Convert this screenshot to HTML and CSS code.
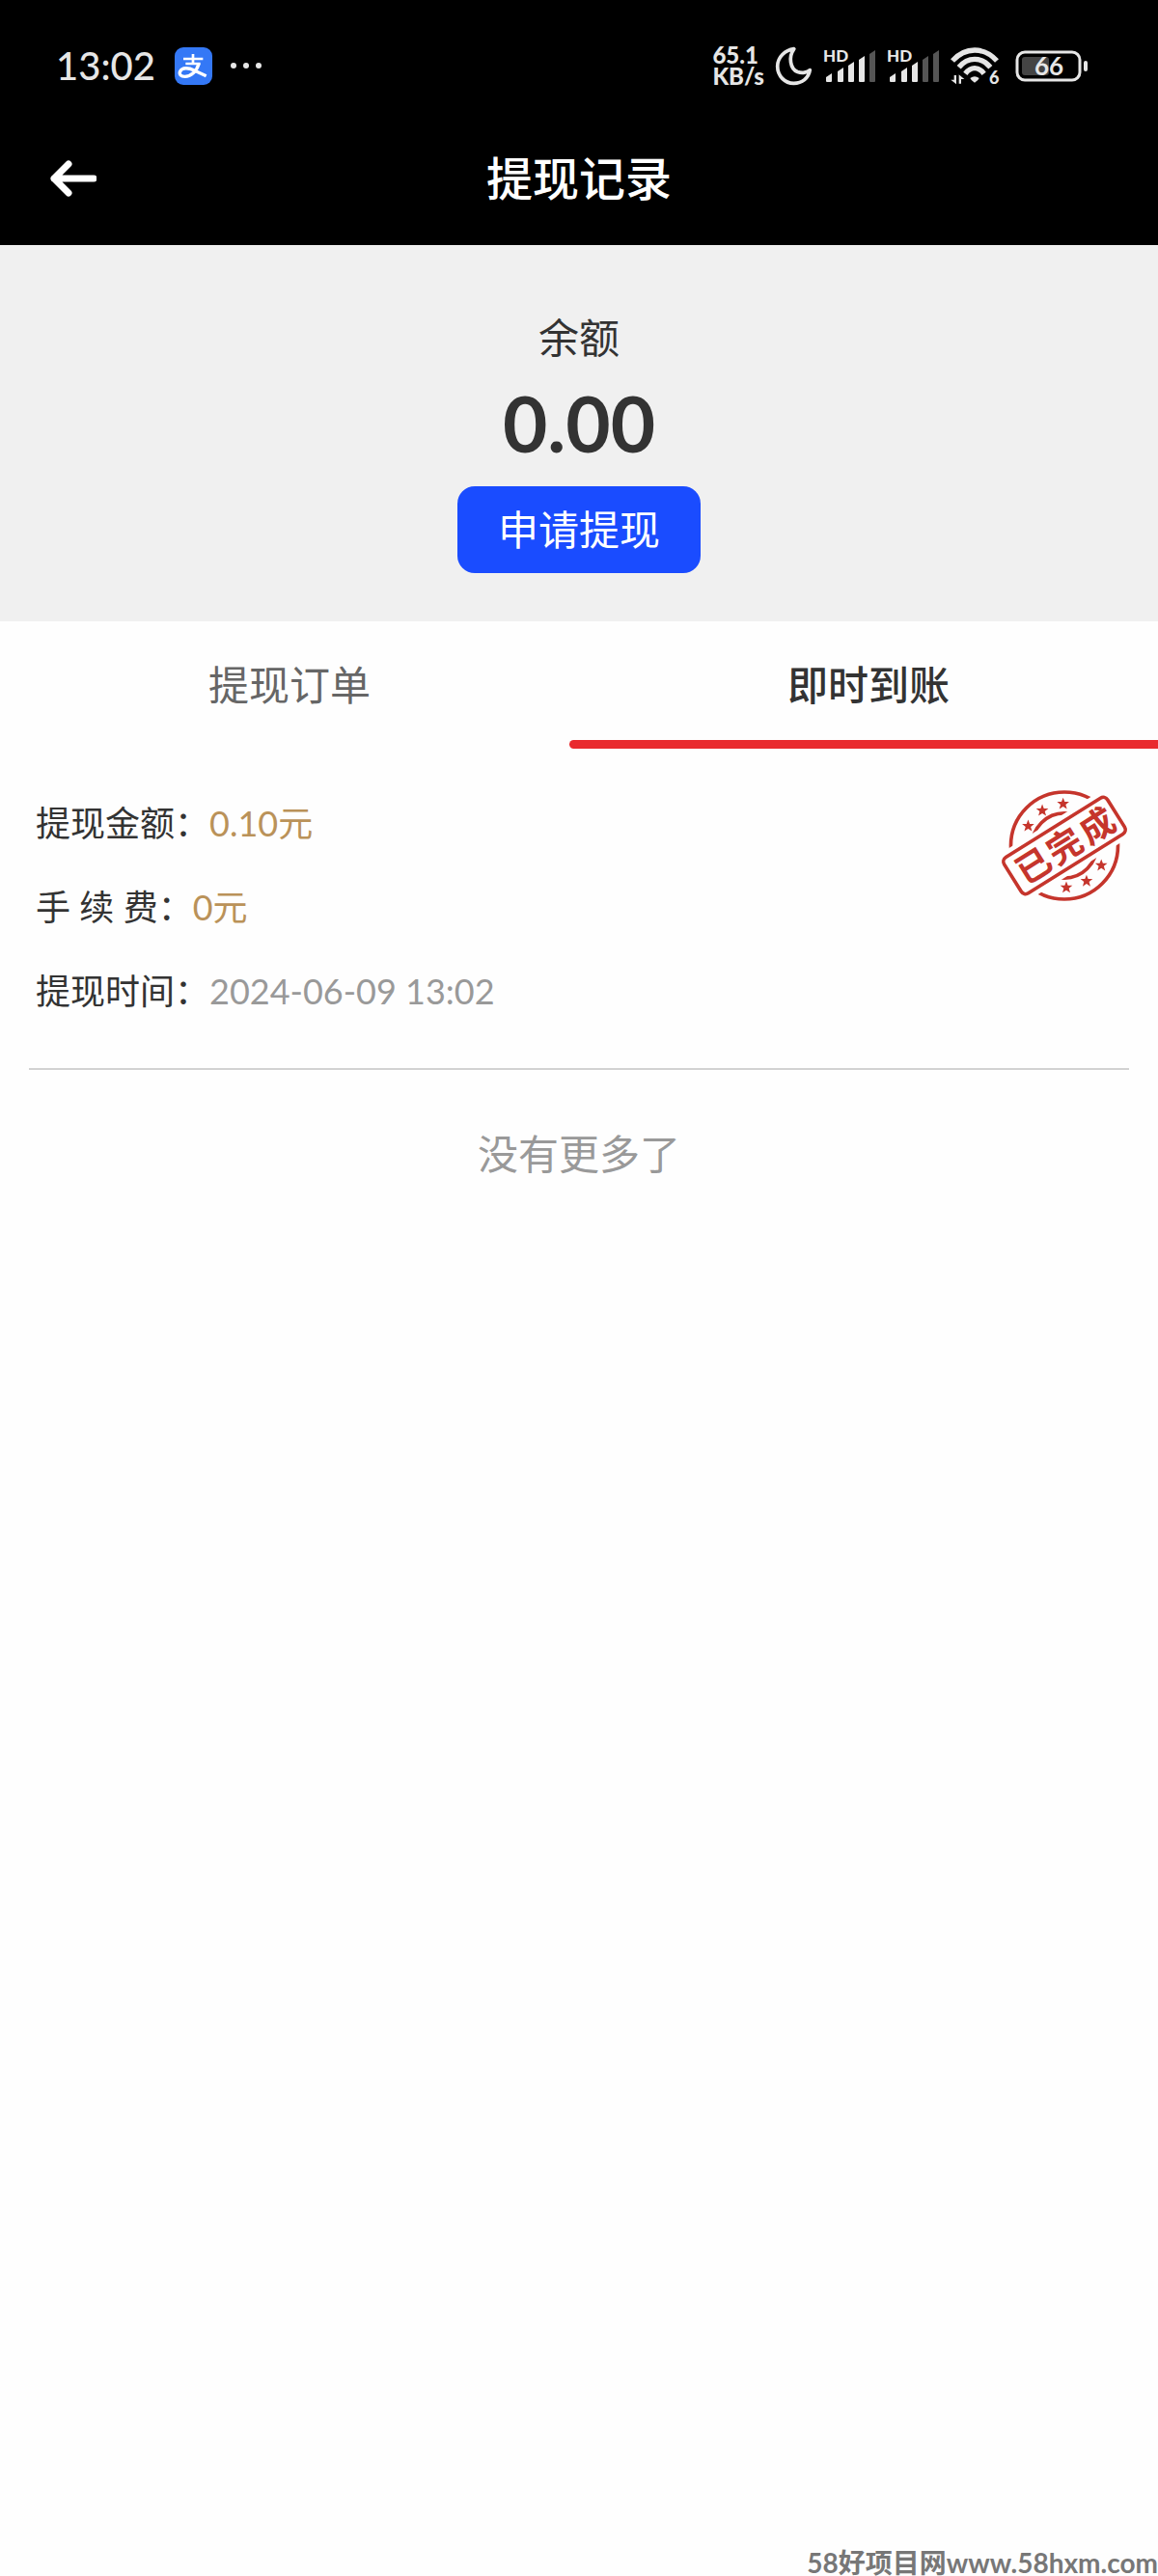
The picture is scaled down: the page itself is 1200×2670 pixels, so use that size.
FILE: index.html
```
<!DOCTYPE html>
<html lang="zh-CN">
<head>
    <meta charset="utf-8">
    <meta name="viewport" content="width=device-width, initial-scale=1">
    <title>提现记录</title>
    <link rel="stylesheet" href="styles.css">
</head>
<body>
    <header class="header">
        <div class="status-bar">
            <div class="status-left">
                <span class="clock">13:02</span>
                <svg class="app-icon" viewBox="0 0 117 117" aria-hidden="true">
                    <rect width="117" height="117" rx="27" fill="#3478f6"/>
                    <g fill="none" stroke="#fff">
                        <path d="M27 36H88M57 21V51M34 51H80" stroke-width="8"/>
                        <path d="M75 51C68 76 50 91 32 91C19 91 13 84 17 75C23 62 43 63 61 72L98 89" stroke-width="10"/>
                    </g>
                </svg>
                <svg class="dots" viewBox="0 0 34 8" aria-hidden="true">
                    <circle cx="4" cy="4" r="3"/>
                    <circle cx="17" cy="4" r="3"/>
                    <circle cx="30" cy="4" r="3"/>
                </svg>
            </div>
            <div class="status-right">
                <p class="speed">65.1<br>KB/s</p>
                <svg class="moon" viewBox="0 0 110 116" aria-hidden="true">
                    <path d="M56 5C29 9 5 29 5 59C5 89 28 111 55 111C81 111 101 95 105 70C97 78 81 81 67 76C44 67 38 30 56 5Z"/>
                </svg>
                <svg class="signal" viewBox="0 0 54 36" aria-hidden="true">
                    <text x="0" y="14">HD</text>
                    <path d="M3 30L9 26V34Q9 35 8 35H4Q3 35 3 34ZM15 24L21 20V34Q21 35 20 35H16Q15 35 15 34ZM26 18L32 14V34Q32 35 31 35H27Q26 35 26 34ZM37 12L43 8V34Q43 35 42 35H38Q37 35 37 34Z"/>
                    <path class="dim" d="M48 6L54 2V34Q54 35 53 35H49Q48 35 48 34Z"/>
                </svg>
                <svg class="signal" viewBox="0 0 54 36" aria-hidden="true">
                    <text x="0" y="14">HD</text>
                    <path d="M3 30L9 26V34Q9 35 8 35H4Q3 35 3 34ZM15 24L21 20V34Q21 35 20 35H16Q15 35 15 34ZM26 18L32 14V34Q32 35 31 35H27Q26 35 26 34Z"/>
                    <path class="dim" d="M37 12L43 8V34Q43 35 42 35H38Q37 35 37 34ZM48 6L54 2V34Q54 35 53 35H49Q48 35 48 34Z"/>
                </svg>
                <svg class="wifi" viewBox="0 0 153 117" aria-hidden="true">
                    <g fill="none" stroke="#e6e6e6" stroke-width="16">
                        <path d="M6 42Q36 9 75 9T144 42"/>
                        <path d="M26 62Q47 37 75 37T124 62"/>
                        <path d="M46 82Q59 65 75 65T104 82"/>
                    </g>
                    <path d="M61 96Q75 86 89 96Q86 104 75 110Q64 104 61 96Z"/>
                    <path d="M11 87H18V115L1 101H11ZM26 113V85L43 99H33V113Z"/>
                    <text x="120" y="114">6</text>
                </svg>
                <svg class="battery" viewBox="0 0 75 33" aria-hidden="true">
                    <rect x="7" y="7" width="28" height="19" rx="3" fill="#444"/>
                    <rect x="2" y="2" width="65" height="29" rx="8" fill="none" stroke="#e6e6e6" stroke-width="3"/>
                    <rect x="71" y="11" width="4" height="11" rx="2"/>
                    <text x="35" y="26">66</text>
                </svg>
            </div>
        </div>
        <nav class="nav-bar">
            <button class="back-btn" type="button" aria-label="返回">
                <svg viewBox="0 0 48 38" aria-hidden="true">
                    <path d="M19 4L4 19L19 34M4 19H45"/>
                </svg>
            </button>
            <h1 class="title">提现记录</h1>
        </nav>
    </header>

    <main>
        <section class="balance">
            <p class="balance-label">余额</p>
            <p class="balance-value">0.00</p>
            <button class="apply-btn" type="button">申请提现</button>
        </section>

        <div class="tabs" role="tablist">
            <button class="tab" type="button" role="tab" aria-selected="false">提现订单</button>
            <button class="tab active" type="button" role="tab" aria-selected="true">即时到账</button>
        </div>

        <section class="records">
            <article class="record">
                <dl class="record-info">
                    <div class="row">
                        <dt>提现金额：</dt>
                        <dd class="money">0.10元</dd>
                    </div>
                    <div class="row">
                        <dt>手 续 费：</dt>
                        <dd class="money">0元</dd>
                    </div>
                    <div class="row">
                        <dt>提现时间：</dt>
                        <dd class="time">2024-06-09 13:02</dd>
                    </div>
                </dl>
                <svg class="stamp" viewBox="106 84 402 352" role="img" aria-label="已完成">
                    <defs>
                        <path id="star" d="M0 -19L5 -6L19 -6L8 3L12 17L0 9L-12 17L-8 3L-19 -6L-5 -6Z"/>
                    </defs>
                    <circle class="ring" cx="307" cy="260" r="167"/>
                    <circle class="ring" cx="307" cy="260" r="101"/>
                    <g transform="rotate(-32 307 260)">
                        <rect class="gap" x="100" y="175" width="414" height="170"/>
                        <rect class="ring" x="117" y="194" width="380" height="132" rx="16"/>
                        <text x="193 307 427" y="301">已完成</text>
                    </g>
                    <use href="#star" x="194" y="198"/>
                    <use href="#star" x="238" y="150"/>
                    <use href="#star" x="303" y="129"/>
                    <use href="#star" x="422" y="321"/>
                    <use href="#star" x="376" y="370"/>
                    <use href="#star" x="313" y="390"/>
                </svg>
            </article>
            <p class="no-more">没有更多了</p>
        </section>
    </main>

    <footer class="site-mark">58好项目网www.58hxm.com</footer>
</body>
</html>
```

FILE: styles.css
```
:root {
    --fg: #333;
    --muted: #999;
    --light: #e6e6e6;
    --blue: #1a4cff;
    --red: #e92a2e;
    --gold: #ba9259;
    --stamp: #c5352c;
    --page: #fefefe;
    --fn: Lato, "Noto Sans CJK SC", sans-serif;
}

* {
    box-sizing: border-box;
    margin: 0;
    padding: 0;
}

body {
    display: flex;
    flex-direction: column;
    min-height: 100vh;
    overflow-x: hidden;
    background-color: var(--page);
    color: var(--fg);
    font-family: var(--fn);
    font-size: 42px;
}

button {
    border: none;
    background: none;
    color: inherit;
    font: inherit;
    cursor: pointer;
}

/* header */

.header {
    background-color: #000;
    color: #fff;
}

.status-bar {
    display: flex;
    justify-content: space-between;
    align-items: center;
    height: 116px;
    padding: 20px 73px 0 58px;
    color: var(--light);
}

.status-left,
.status-right {
    display: flex;
    align-items: center;
}

.status-bar svg {
    display: block;
    overflow: visible;
    fill: var(--light);
}

.clock {
    margin-right: 20px;
    font-size: 40px;
    font-weight: 500;
    line-height: 48px;
}

.app-icon {
    width: 39px;
    height: 39px;
    margin-right: 18px;
}

.dots {
    width: 34px;
    height: 8px;
}

.status-right {
    gap: 12px;
}

.speed {
    font-size: 24px;
    font-weight: 900;
    line-height: 22px;
}

.moon {
    width: 37px;
    height: 39px;
}

.status-bar .moon {
    fill: none;
    stroke: var(--light);
    stroke-width: 11px;
    stroke-linejoin: round;
}

.signal {
    width: 54px;
    height: 36px;
}

.signal text {
    font-size: 17px;
    font-weight: 900;
}

.signal .dim {
    fill: #555;
}

.wifi {
    width: 51px;
    height: 39px;
    margin-right: 4px;
}

.wifi text {
    font-size: 54px;
    font-weight: 900;
}

.battery {
    width: 75px;
    height: 33px;
}

.battery text {
    font-size: 26px;
    font-weight: 700;
    text-anchor: middle;
}

.nav-bar {
    display: grid;
    grid-template-columns: 1fr auto 1fr;
    align-items: center;
    height: 138px;
    padding: 0 52px;
}

.back-btn {
    justify-self: start;
}

.back-btn svg {
    display: block;
    width: 48px;
    height: 38px;
    fill: none;
    stroke: #fff;
    stroke-width: 7px;
    stroke-linecap: round;
    stroke-linejoin: round;
}

.title {
    font-size: 48px;
    font-weight: 500;
    line-height: 60px;
}

/* balance */

.balance {
    display: flex;
    flex-direction: column;
    align-items: center;
    padding: 66px 0 50px;
    background-color: #f0f0f0;
}

.balance-label {
    line-height: 60px;
}

.balance-value {
    font-size: 80px;
    font-weight: 700;
    line-height: 116px;
}

.apply-btn {
    height: 90px;
    margin-top: 8px;
    padding: 0 42px 6px;
    border-radius: 18px;
    background-color: var(--blue);
    color: #fff;
}

/* tabs */

.tabs {
    display: flex;
}

.tab {
    position: relative;
    flex: 1;
    height: 132px;
    padding-bottom: 6px;
    color: #666;
}

.tab.active {
    color: var(--fg);
    font-weight: 500;
}

.tab.active::after {
    content: "";
    position: absolute;
    right: -10px;
    bottom: 0;
    left: -10px;
    height: 9px;
    border-radius: 5px;
    background-color: var(--red);
}

/* records */

.records {
    padding: 0 30px;
}

.record {
    display: flex;
    justify-content: space-between;
    align-items: flex-start;
    padding: 34px 0 36px 7px;
    border-bottom: 2px solid #d2d2d2;
}

.row {
    display: flex;
    font-size: 36px;
    line-height: 87px;
}

.row dt {
    font-family: "Noto Sans", "Noto Sans CJK SC", sans-serif;
}

.money {
    color: var(--gold);
}

.time {
    color: var(--muted);
}

.stamp {
    width: 134px;
    height: 117px;
    margin-top: 8px;
    overflow: visible;
    fill: var(--stamp);
}

.stamp .ring {
    fill: none;
    stroke: var(--stamp);
    stroke-width: 11px;
}

.stamp .gap {
    fill: var(--page);
}

.stamp text {
    font-size: 108px;
    font-weight: 700;
    text-anchor: middle;
}

.no-more {
    padding-top: 57px;
    color: var(--muted);
    line-height: 60px;
    text-align: center;
}

.site-mark {
    margin-top: auto;
    color: #777;
    font-size: 28px;
    font-weight: 700;
    line-height: 28px;
    text-align: right;
}
```
